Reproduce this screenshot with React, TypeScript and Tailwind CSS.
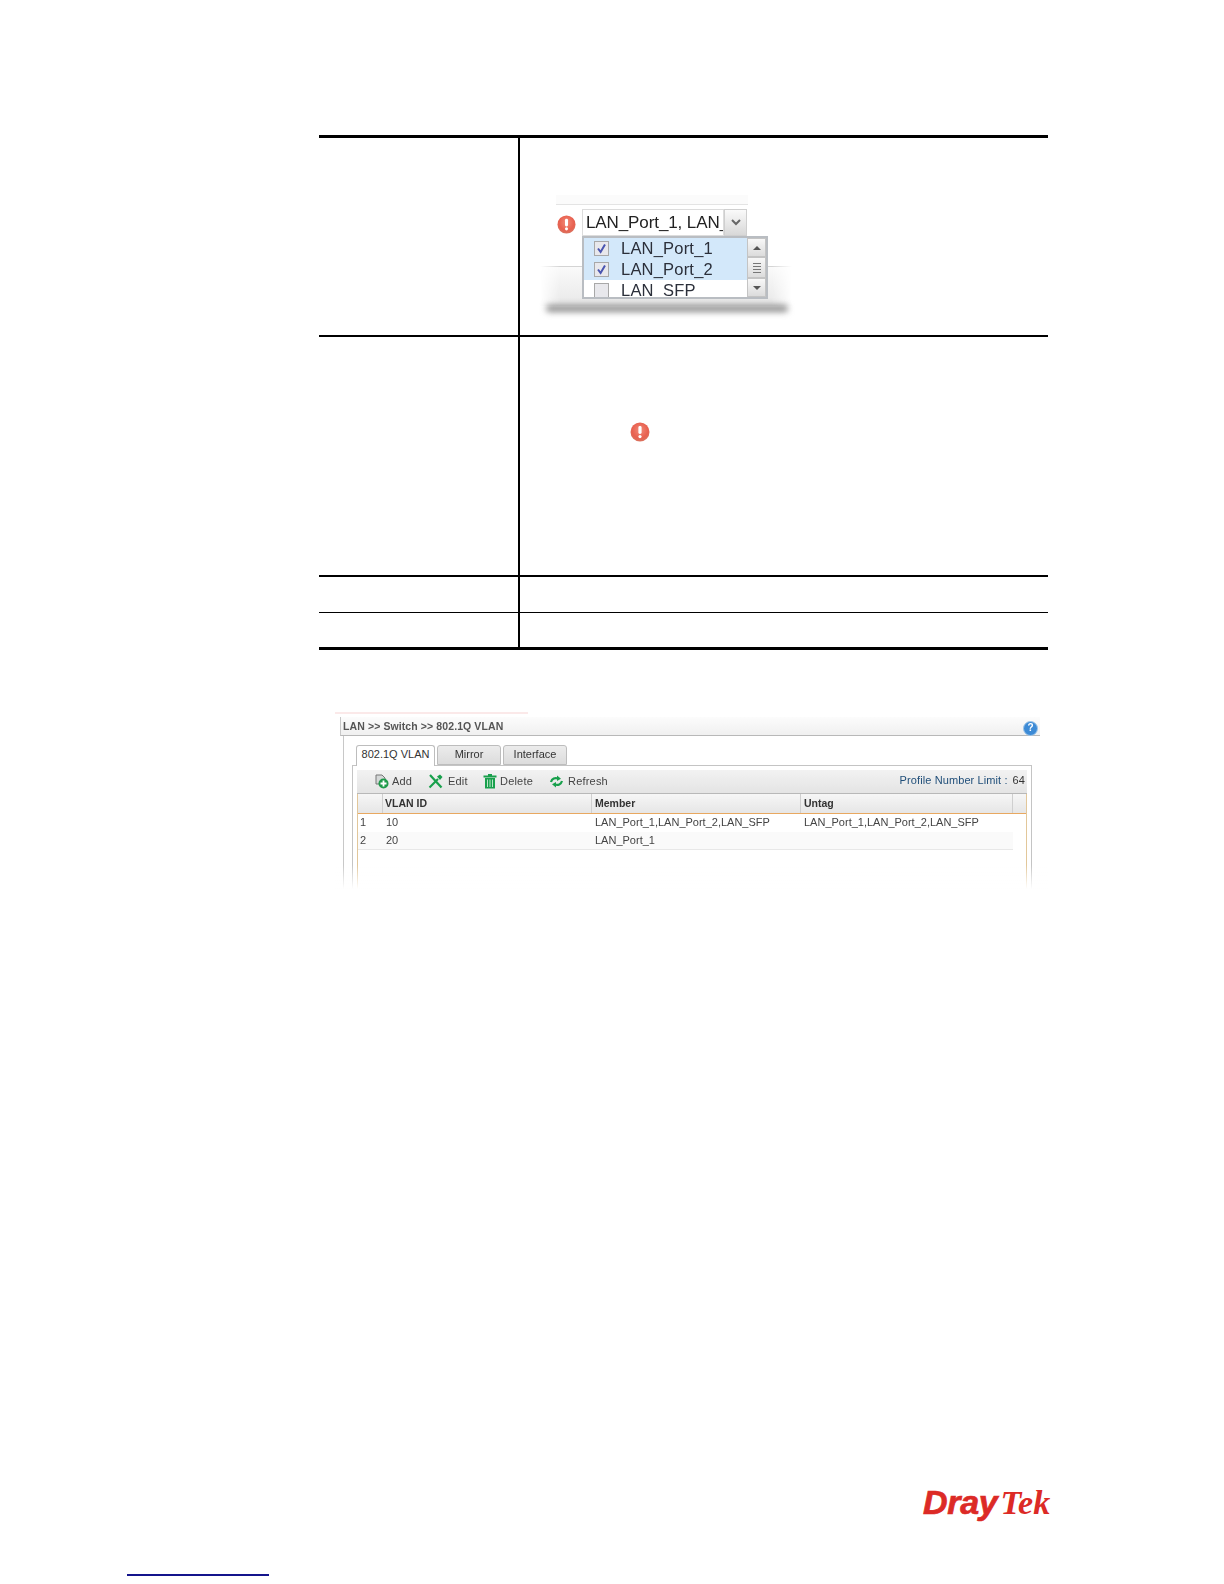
function AlertIcon({ size }: { size: number }) {
  return (
    <svg width={size} height={size} viewBox="0 0 20 20" className="block shrink-0">
      <defs>
        <radialGradient id={`alert${size}`} cx="50%" cy="40%" r="60%">
          <stop offset="0%" stopColor="#f28a78" />
          <stop offset="70%" stopColor="#e8604f" />
          <stop offset="100%" stopColor="#d9735f" />
        </radialGradient>
      </defs>
      <circle cx="10" cy="10" r="9.5" fill={`url(#alert${size})`} />
      <rect x="8.4" y="4" width="3.2" height="8" rx="1.4" fill="#fff" />
      <circle cx="10" cy="14.6" r="1.6" fill="#fff" />
    </svg>
  )
}

function Check({ checked }: { checked: boolean }) {
  return (
    <span className="flex h-[15px] w-[15px] shrink-0 items-center justify-center border border-[#a8a8a8] bg-[#e8e8ec]">
      {checked && (
        <svg width="11" height="11" viewBox="0 0 11 11">
          <path d="M2 5.5 L4.6 9 L9 1.5" fill="none" stroke="#4a55b0" strokeWidth="2" />
        </svg>
      )}
    </span>
  )
}

function ScrollBtn({ children, grow }: { children: React.ReactNode; grow?: boolean }) {
  return (
    <div className={`flex items-center justify-center border border-[#c4c4c4] bg-gradient-to-b from-[#f8f8f8] to-[#dcdcdc] ${grow ? "flex-1" : "h-[19px]"}`}>
      {children}
    </div>
  )
}

function DropdownShot() {
  return (
    <div className="relative ml-[20px] mt-[57px] h-[132px] w-[252px] blur-[0.4px]" style={{ fontFamily: '"Liberation Sans", Arial, sans-serif' }}>
      {/* page behind the dropdown */}
      <div className="absolute left-[16px] top-0 h-[10px] w-[192px] border-b border-[#e4e4e4] bg-[#fbfbfb]" />
      <div className="absolute left-0 right-0 top-[71px] h-[40px] border-t border-[#d4d4d4] bg-gradient-to-b from-[#fafafa] to-[#e8e8e8] [mask-image:linear-gradient(to_right,transparent,black_8%,black_92%,transparent)]" />
      <div className="absolute left-[6px] right-[4px] top-[110px] h-[7px] rounded-full bg-[#8f8f8f] blur-[3px]" />

      <div className="absolute left-[17px] top-[20px]">
        <AlertIcon size={19} />
      </div>
      <div className="absolute left-[42px] top-[14px] flex h-[27px] w-[165px]">
        <div className="w-[142px] overflow-hidden whitespace-nowrap border border-[#dcdcdc] bg-white pl-[3px] text-[17px] leading-[25px] tracking-[-0.1px] text-[#222]">
          LAN_Port_1, LAN_
        </div>
        <div className="flex w-[23px] items-center justify-center border border-[#cfcfcf] bg-gradient-to-b from-[#fafafa] to-[#d8d8d8]">
          <svg width="10" height="7" viewBox="0 0 10 7">
            <path d="M1 1 L5 5 L9 1" fill="none" stroke="#666" strokeWidth="2" />
          </svg>
        </div>
      </div>
      <div className="absolute left-[42px] top-[41px] flex h-[63px] w-[186px] border-2 border-[#b9bdc2] bg-white">
        <div className="flex-1 overflow-hidden">
          {[
            { name: "LAN_Port_1", on: true },
            { name: "LAN_Port_2", on: true },
            { name: "LAN_SFP", on: false },
          ].map((row) => (
            <div key={row.name} className={`flex h-[21px] items-center gap-[12px] pl-[10px] text-[16.5px] tracking-[0.2px] text-[#2b2f3a] ${row.on ? "bg-[#d3e8fa]" : "bg-white"}`}>
              <Check checked={row.on} />
              <span>{row.name}</span>
            </div>
          ))}
        </div>
        <div className="flex w-[19px] flex-col">
          <ScrollBtn>
            <span className="h-0 w-0 border-x-[4px] border-b-[4px] border-x-transparent border-b-[#555]" />
          </ScrollBtn>
          <ScrollBtn grow>
            <span className="flex flex-col gap-[2px]">
              <span className="block h-px w-[8px] bg-[#777]" />
              <span className="block h-px w-[8px] bg-[#777]" />
              <span className="block h-px w-[8px] bg-[#777]" />
              <span className="block h-px w-[8px] bg-[#777]" />
            </span>
          </ScrollBtn>
          <ScrollBtn>
            <span className="h-0 w-0 border-x-[4px] border-t-[4px] border-x-transparent border-t-[#555]" />
          </ScrollBtn>
        </div>
      </div>
    </div>
  )
}

function AddIcon() {
  return (
    <svg width="15" height="15" viewBox="0 0 15 15" className="shrink-0">
      <path d="M2 1 H8 L11 4 V10 H2 Z" fill="#d5d8d8" stroke="#777" strokeWidth="1" />
      <circle cx="9.5" cy="9.5" r="5" fill="#1f9a4a" />
      <path d="M9.5 6.5 V12.5 M6.5 9.5 H12.5" stroke="#fff" strokeWidth="1.8" />
    </svg>
  )
}

function EditIcon() {
  return (
    <svg width="15" height="15" viewBox="0 0 15 15" className="shrink-0">
      <path d="M2 1 L13.5 13.5" stroke="#18a04c" strokeWidth="2.2" />
      <path d="M1.5 13.5 L10 5" stroke="#18a04c" strokeWidth="2.2" />
      <path d="M9 2.5 L12 0.5 L14.5 3 L12 6 Z" fill="#18a04c" />
    </svg>
  )
}

function DeleteIcon() {
  return (
    <svg width="14" height="15" viewBox="0 0 14 15" className="shrink-0">
      <rect x="0.5" y="1.5" width="13" height="2" fill="#18a04c" />
      <rect x="5" y="0" width="4" height="2" fill="#18a04c" />
      <path d="M2 4 H12 V14.5 H2 Z" fill="#18a04c" />
      <path d="M4.5 5.5 V13 M7 5.5 V13 M9.5 5.5 V13" stroke="#b9e6c8" strokeWidth="1" />
    </svg>
  )
}

function RefreshIcon() {
  return (
    <svg width="15" height="13" viewBox="0 0 15 13" className="shrink-0">
      <path d="M2 7 C3 3.5 6 2.5 9 3.5" fill="none" stroke="#18a04c" strokeWidth="2.2" />
      <path d="M8 0.5 L12 3.8 L8 6 Z" fill="#18a04c" />
      <path d="M13 6 C12 9.5 9 10.5 6 9.5" fill="none" stroke="#18a04c" strokeWidth="2.2" />
      <path d="M7 12.5 L3 9.2 L7 7 Z" fill="#18a04c" />
    </svg>
  )
}

function HelpIcon() {
  return (
    <span className="mt-[3px] flex h-[15px] w-[15px] items-center justify-center rounded-full border border-[#9cc4e8] bg-[#3d8bd6] text-[10px] font-bold leading-none text-white">
      ?
    </span>
  )
}

function VlanShot() {
  return (
    <div className="relative ml-[16px] mt-[62px] h-[177px] w-[713px] overflow-hidden blur-[0.4px]" style={{ fontFamily: '"Liberation Sans", Arial, sans-serif' }}>
      <div className="h-[2px] w-[193px] bg-[#fbe9e9]" />
      <div className="ml-[5px] mt-[3px] flex h-[19px] w-[700px] items-center justify-between border-b border-[#b8b8b8] border-l border-l-[#c8c8c8] bg-gradient-to-b from-[#fcfcfc] to-[#f0f0f0] pl-[2px] pr-[2px] pt-[1px]">
        <span className="text-[10.5px] font-bold tracking-[0.1px] text-[#555]">LAN &gt;&gt; Switch &gt;&gt; 802.1Q VLAN</span>
        <HelpIcon />
      </div>
      <div className="ml-[8px] h-[160px] w-[697px] border-l border-[#c8c8c8] pl-[8px] pt-[9px]">
        <div className="flex h-[20px] gap-[2px] pl-[4px] text-[11px] leading-[17px] text-[#333]">
          <div className="relative z-10 h-[21px] w-[79px] rounded-t-[3px] border border-b-0 border-[#bdbdbd] bg-white text-center">802.1Q VLAN</div>
          <div className="w-[64px] rounded-t-[3px] border border-[#bdbdbd] bg-gradient-to-b from-[#ececec] to-[#dcdcdc] text-center">Mirror</div>
          <div className="w-[64px] rounded-t-[3px] border border-[#bdbdbd] bg-gradient-to-b from-[#ececec] to-[#dcdcdc] text-center">Interface</div>
        </div>
        <div className="h-[140px] w-[680px] border border-[#c4c4c4] pl-[4px] pr-[4px] pt-[4px]">
          <div className="flex h-[24px] items-center justify-between border-b border-[#b8b8b8] bg-gradient-to-b from-[#f2f2f2] to-[#e4e4e4] pl-[17px] pr-[2px] text-[11px] text-[#444]">
            <div className="flex items-center tracking-[0.2px]">
              <AddIcon />
              <span className="ml-[3px] w-[36px]">Add</span>
              <EditIcon />
              <span className="ml-[5px] w-[35px]">Edit</span>
              <DeleteIcon />
              <span className="ml-[3px] w-[49px]">Delete</span>
              <RefreshIcon />
              <span className="ml-[4px]">Refresh</span>
            </div>
            <div className="-mt-[3px] tracking-[0.1px] text-[#1f4e79]">
              Profile Number Limit :<span className="ml-[5px] text-[#333]">64</span>
            </div>
          </div>
          <div className="h-[120px] border-x border-x-[#e2c79a] text-[11px] text-[#444]">
            <div className="grid h-[20px] grid-cols-[25px_209px_209px_212px_1fr] border-b border-[#e8a860] bg-gradient-to-b from-[#f6f6f6] to-[#e6e6e6] text-[10.5px] font-bold leading-[19px] text-[#333]">
              <div className="border-r border-[#cfcfcf]" />
              <div className="border-r border-[#cfcfcf] pl-[2px]">VLAN ID</div>
              <div className="border-r border-[#cfcfcf] pl-[3px]">Member</div>
              <div className="border-r border-[#cfcfcf] pl-[3px]">Untag</div>
              <div />
            </div>
            <div className="grid h-[18px] grid-cols-[25px_209px_209px_212px] leading-[16px]">
              <div className="pl-[2px]">1</div>
              <div className="pl-[3px]">10</div>
              <div className="pl-[3px]">LAN_Port_1,LAN_Port_2,LAN_SFP</div>
              <div className="pl-[3px]">LAN_Port_1,LAN_Port_2,LAN_SFP</div>
            </div>
            <div className="grid h-[18px] w-[655px] grid-cols-[25px_209px_209px_212px] border-b border-[#e8e8e8] bg-[#fafafa] leading-[17px]">
              <div className="pl-[2px]">2</div>
              <div className="pl-[3px]">20</div>
              <div className="pl-[3px]">LAN_Port_1</div>
              <div />
            </div>
          </div>
        </div>
      </div>
      {/* screenshot fades out at the bottom */}
      <div className="absolute bottom-0 left-0 right-0 h-[24px] bg-gradient-to-b from-white/0 to-white" />
    </div>
  )
}

export default function App() {
  return (
    <div className="h-[1584px] w-[1224px] overflow-hidden bg-white" style={{ fontFamily: '"Liberation Sans", Arial, sans-serif' }}>
      <div className="pt-[135px] pl-[319px]">
        <div className="w-[729px]">
          <div className="grid h-[202px] grid-cols-[201px_1fr] border-b-2 border-t-[3px] border-black">
            <div className="border-r-2 border-black" />
            <DropdownShot />
          </div>
          <div className="grid h-[240px] grid-cols-[201px_1fr] border-b-2 border-black">
            <div className="border-r-2 border-black" />
            <div className="pl-[110px] pt-[85px]">
              <AlertIcon size={20} />
            </div>
          </div>
          <div className="grid h-[36px] grid-cols-[201px_1fr] border-b border-black">
            <div className="border-r-2 border-black" />
            <div />
          </div>
          <div className="grid h-[37px] grid-cols-[201px_1fr] border-b-[3px] border-black">
            <div className="border-r-2 border-black" />
            <div />
          </div>
        </div>
        <VlanShot />
      </div>
      <div className="ml-[923px] mt-[595px] flex h-[36px] w-[130px] items-baseline whitespace-nowrap leading-[36px] text-[#dc2a26]">
        <span className="text-[34px] font-bold italic tracking-[-0.3px] [-webkit-text-stroke:0.7px_#dc2a26]">Dray</span>
        <span className="ml-[3px] text-[34px] font-bold italic" style={{ fontFamily: '"Liberation Serif", "Times New Roman", serif' }}>Tek</span>
      </div>
      <div className="ml-[127px] mt-[54px] h-[2px] w-[142px] bg-[#14148c]" />
    </div>
  )
}
